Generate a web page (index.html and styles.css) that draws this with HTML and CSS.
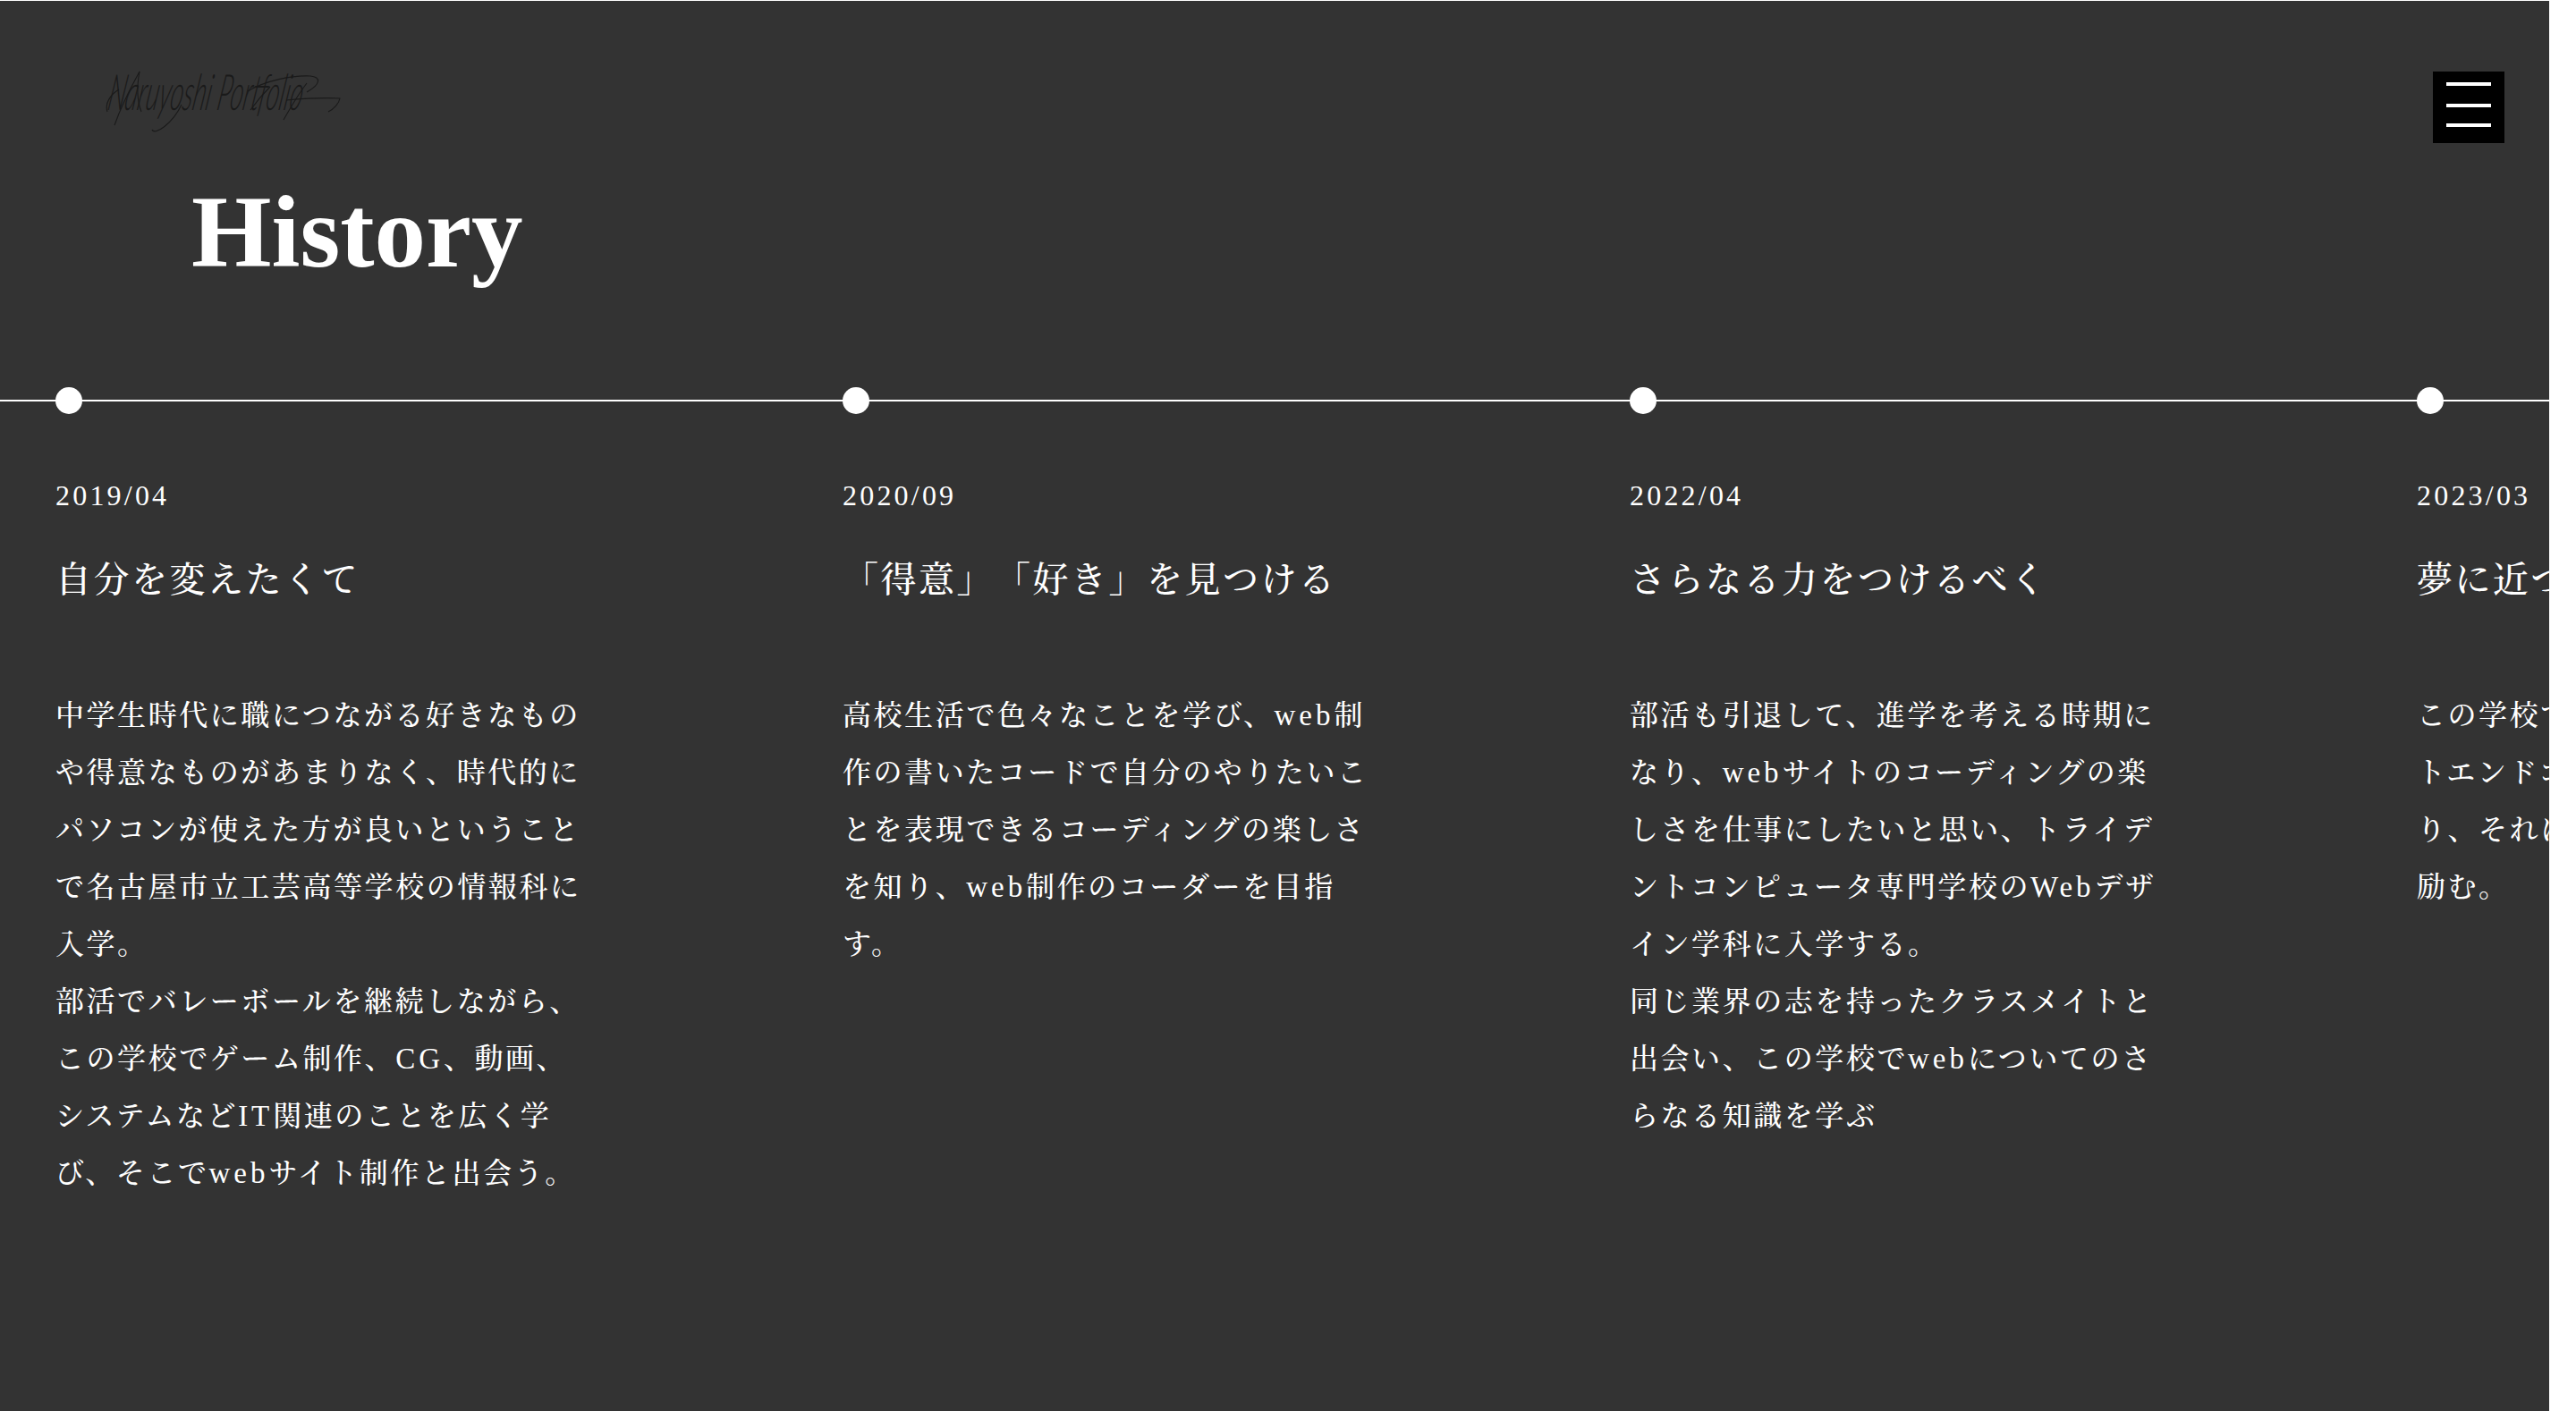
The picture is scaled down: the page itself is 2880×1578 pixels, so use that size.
FILE: index.html
```html
<!DOCTYPE html>
<html lang="ja">
<head>
  <meta charset="UTF-8">
  <title>History</title>
  <link rel="stylesheet" href="styles.css">
</head>
<body>

  <main class="page">
    <header class="header">
      <a class="logo">
        <span class="logo-text">Naruyoshi Portfolio</span>
        <svg class="logo-swash" viewBox="0 0 265 70" width="265" height="70" fill="none" stroke="#1a1a1a" stroke-width="1.1">
          <path d="M16 20 C6 26 0 36 3 45"/>
          <path d="M11 60 C18 40 28 20 39 0"/>
          <path d="M39 0 C36 16 36 32 41 45"/>
          <path d="M53 65 C56 72 76 58 86 37"/>
          <path d="M160 22 C180 10 210 4 230 5 C242 6 242 14 226 23"/>
          <path d="M185 17 C176 26 168 36 163 43"/>
          <path d="M200 54 C208 40 216 26 226 13"/>
          <path d="M203 32 C225 30 245 29 263 30 C262 36 256 42 250 45"/>
        </svg>
      </a>
      <button class="menu-btn" type="button" aria-label="menu">
        <span class="bar"></span>
        <span class="bar"></span>
        <span class="bar"></span>
      </button>
    </header>

    <h1 class="title">History</h1>

    <section class="timeline">
      <article class="item">
        <span class="dot"></span>
        <p class="date">2019/04</p>
        <h2 class="head">自分を変えたくて</h2>
        <p class="text">中学生時代に職につながる好きなものや得意なものがあまりなく、時代的にパソコンが使えた方が良いということで名古屋市立工芸高等学校の情報科に入学。<br>部活でバレーボールを継続しながら、この学校でゲーム制作、<span class="en">CG</span>、動画、システムなど<span class="en">IT</span>関連のことを広く学び、そこで<span class="en">web</span>サイト制作と出会う。</p>
      </article>
      <article class="item">
        <span class="dot"></span>
        <p class="date">2020/09</p>
        <h2 class="head">「得意」「好き」を見つける</h2>
        <p class="text">高校生活で色々なことを学び、<span class="en">web</span>制作の書いたコードで自分のやりたいことを表現できるコーディングの楽しさを知り、<span class="en">web</span>制作のコーダーを目指す。</p>
      </article>
      <article class="item">
        <span class="dot"></span>
        <p class="date">2022/04</p>
        <h2 class="head">さらなる力をつけるべく</h2>
        <p class="text">部活も引退して、進学を考える時期になり、<span class="en">web</span>サイトのコーディングの楽しさを仕事にしたいと思い、トライデントコンピュータ専門学校の<span class="en">Web</span>デザイン学科に入学する。<br>同じ業界の志を持ったクラスメイトと出会い、この学校で<span class="en">web</span>についてのさらなる知識を学ぶ</p>
      </article>
      <article class="item">
        <span class="dot"></span>
        <p class="date">2023/03</p>
        <h2 class="head">夢に近づくために</h2>
        <p class="text">この学校でさらに技術を磨き、フロントエンドコーダーとしての進路が決まり、それに向けて日々の制作と学習に励む。</p>
      </article>
    </section>
  </main>

</body>
</html>
```

FILE: styles.css
```css
* {
  box-sizing: border-box;
}
html, body {
  margin: 0;
  height: 100%;
  overflow: hidden;
}
body {
  background: #fff;
  font-family: "Liberation Serif", "Noto Serif CJK JP", serif;
  color: #fff;
  text-spacing-trim: space-all;
}
p, h1, h2 {
  margin: 0;
}

.page {
  width: 2850px;
  height: 1578px;
  background: #333;
  border-top: 1px solid #fff;
  overflow: hidden;
}

.header {
  display: flex;
  justify-content: space-between;
  align-items: flex-start;
  padding: 79px 50px 0 117px;
}
.logo {
  position: relative;
  display: block;
  width: 265px;
  height: 70px;
}
.logo-text {
  display: block;
  width: 530px;
  padding-left: 19px;
  font-family: Lato, sans-serif;
  font-size: 56px;
  font-weight: 300;
  font-style: italic;
  line-height: 44px;
  white-space: nowrap;
  color: #1a1a1a;
  transform: scaleX(.5) skewX(-20deg);
  transform-origin: left top;
}
.logo-swash {
  position: absolute;
  left: 0;
  top: 0;
  overflow: visible;
}
.menu-btn {
  display: flex;
  flex-direction: column;
  align-items: center;
  width: 80px;
  height: 80px;
  padding: 12px 0 0;
  background: #000;
  border: none;
}
.bar {
  width: 50px;
  height: 4px;
  background: #fff;
}
.bar + .bar {
  margin-top: 20px;
}
.bar:last-child {
  margin-top: 18px;
}

.title {
  margin: 42px 0 0 214px;
  font-size: 115px;
  font-weight: bold;
  line-height: 1;
}

.timeline {
  position: relative;
  display: flex;
  margin-top: 116px;
  padding-left: 62px;
}
.timeline::before {
  content: "";
  position: absolute;
  left: 0;
  right: 0;
  top: 14px;
  height: 2px;
  background: #fff;
}
.item {
  position: relative;
  flex: 0 0 880px;
}
.dot {
  display: block;
  width: 30px;
  height: 30px;
  border-radius: 50%;
  background: #fff;
}
.date {
  margin-top: 67px;
  font-size: 32px;
  line-height: 48px;
  letter-spacing: .1em;
}
.head {
  margin-top: 41px;
  font-size: 40px;
  font-weight: 500;
  line-height: 60px;
  letter-spacing: .0625em;
}
.text {
  width: 590px;
  margin-top: 89px;
  font-size: 32px;
  font-weight: 500;
  line-height: 64px;
  letter-spacing: .08em;
}
.en {
  font-size: 33px;
  letter-spacing: .12em;
}
```
